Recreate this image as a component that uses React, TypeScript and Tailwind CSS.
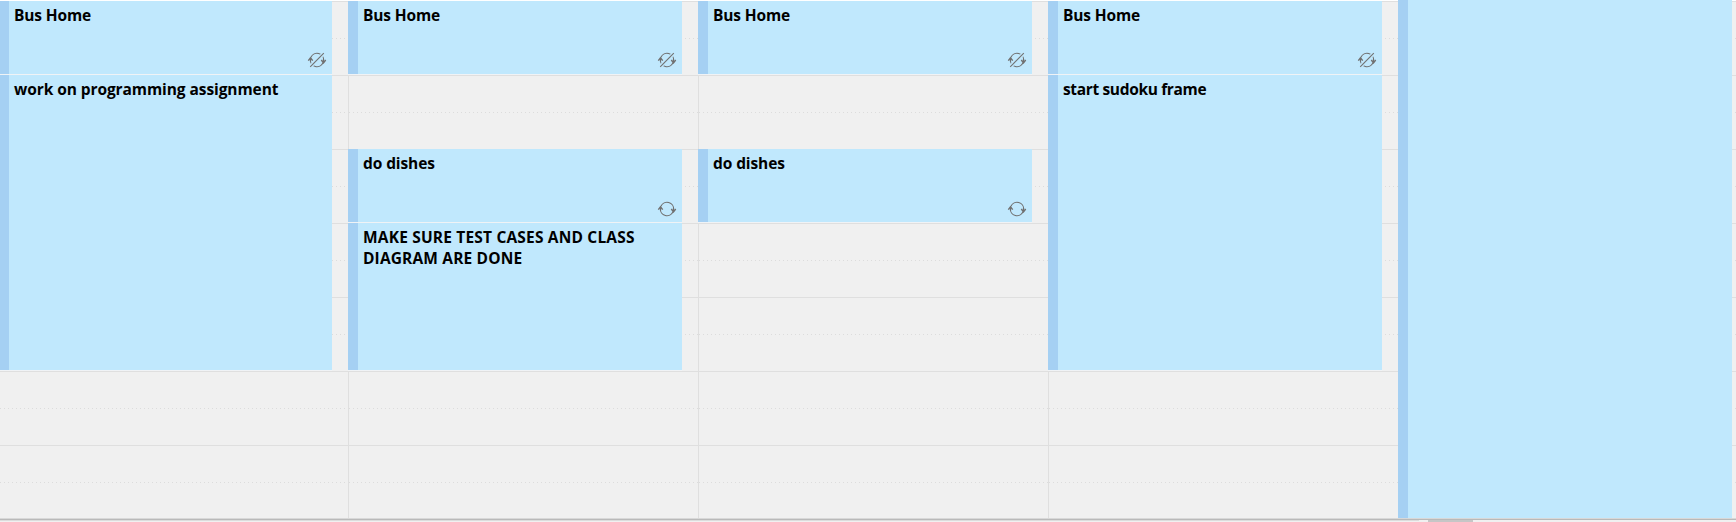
type EventItem = {
  lines: { text: string; spacing: string }[];
  place: string;
  icon?: "recurring" | "exception";
};

const HOURS = ["row-start-1", "row-start-2", "row-start-3", "row-start-4", "row-start-5", "row-start-6", "row-start-7"];

const busHome: EventItem = {
  lines: [{ text: "Bus Home", spacing: "tracking-[-0.15px]" }],
  place: "row-start-1 h-[73px]",
  icon: "exception",
};
const dishes: EventItem = {
  lines: [{ text: "do dishes", spacing: "tracking-[-0.1px]" }],
  place: "row-start-3 h-[73px]",
  icon: "recurring",
};

const DAYS: EventItem[][] = [
  [
    busHome,
    {
      lines: [{ text: "work on programming assignment", spacing: "tracking-[-0.08px]" }],
      place: "row-start-2 row-span-4 h-[295px]",
    },
  ],
  [
    busHome,
    dishes,
    {
      lines: [
        { text: "MAKE SURE TEST CASES AND CLASS", spacing: "tracking-[0.18px]" },
        { text: "DIAGRAM ARE DONE", spacing: "tracking-[0.15px]" },
      ],
      place: "row-start-4 row-span-2 h-[147px]",
    },
  ],
  [busHome, dishes],
  [
    busHome,
    {
      lines: [{ text: "start sudoku frame", spacing: "tracking-[-0.35px]" }],
      place: "row-start-2 row-span-4 h-[295px]",
    },
  ],
];

function RecurIcon({ crossed }: { crossed: boolean }) {
  return (
    <svg width="20" height="16" viewBox="0 0 20 16" fill="none" stroke="#707070" strokeWidth="1.1">
      <path d="M4 5.2A6.6 6.6 0 0 1 16.6 8.5" />
      <path d="M16 10.8A6.6 6.6 0 0 1 3.4 7.5" />
      {crossed && <path d="M3.2 14.8L16.8 1.2" stroke="#c0e8fd" strokeWidth="3.4" />}
      <path d="M1.3 8.6L3.5 5.8L5.7 8.6M14.3 8L16.5 10.8L18.7 8" strokeWidth="1.4" />
      <path d="M3.5 5.5V9.5M16.5 7V11" strokeWidth="1.2" />
      {crossed && <path d="M3.2 14.8L16.8 1.2" />}
    </svg>
  );
}

function HourCell({ row, inset }: { row: string; inset?: boolean }) {
  return (
    <div className={`${row} col-start-1 h-[74px] border-t border-[#dfdfdf] pt-9 ${inset ? "pl-[3px]" : ""}`}>
      <div className="h-px bg-[repeating-linear-gradient(90deg,#dcdcdc_0px_1px,transparent_1px_4px)]" />
    </div>
  );
}

function EventCard({ item, first }: { item: EventItem; first: boolean }) {
  return (
    <div
      className={`${item.place} col-start-1 z-10 flex flex-col justify-between bg-[#c0e8fd] ${
        first ? "w-[332px] border-l-[9px] pl-[5px]" : "-ml-px w-[334px] border-l-[10px] pl-[5px]"
      } border-[#a5d0f3] pt-1 shadow-[0_1px_0_#f0f3f6]`}
    >
      <div>
        {item.lines.map((l) => (
          <div key={l.text} className={`h-[21px] leading-[21px] whitespace-nowrap ${l.spacing}`}>
            {l.text}
          </div>
        ))}
      </div>
      {item.icon && (
        <div className={`flex justify-end pr-[5px] ${item.icon === "exception" ? "pb-[6px]" : "pb-[5px]"}`}>
          <RecurIcon crossed={item.icon === "exception"} />
        </div>
      )}
    </div>
  );
}

export default function App() {
  return (
    <div className="h-[522px] w-[1736px] overflow-hidden bg-[#f0f0f0] font-['Open_Sans','Noto_Sans',sans-serif] text-[15.5px] font-bold text-black">
      <div className="flex h-[518px] overflow-hidden">
        {DAYS.map((events, d) => (
          <div key={d} className={`shrink-0 border-t border-t-white ${d === 0 ? "w-[348px]" : "w-[350px]"}`}>
            <div className={`grid grid-rows-[repeat(7,74px)] ${d === 0 ? "" : "border-l border-[#dfdfdf]"}`}>
              {HOURS.map((row) => (
                <HourCell key={row} row={row} />
              ))}
              {events.map((e) => (
                <EventCard key={e.place} item={e} first={d === 0} />
              ))}
            </div>
          </div>
        ))}
        <div className="h-[518px] w-[334px] shrink-0 border-l-[10px] border-[#a5d0f3] bg-[#c0e8fd]" />
        <div className="grow border-t border-white">
          {HOURS.map((row) => (
            <HourCell key={row} row={row} inset />
          ))}
        </div>
      </div>
      <div className="h-px bg-[#d8d8d8]" />
      <div className="h-px bg-[#b9b9b9]" />
      <div className="flex h-[2px] bg-[#f0f0f0]">
        <div className="h-px w-[1419px] bg-[#dcdcdc]" />
        <div className="ml-[9px] h-[2px] w-[45px] bg-[#c6c6c6]" />
      </div>
    </div>
  );
}
